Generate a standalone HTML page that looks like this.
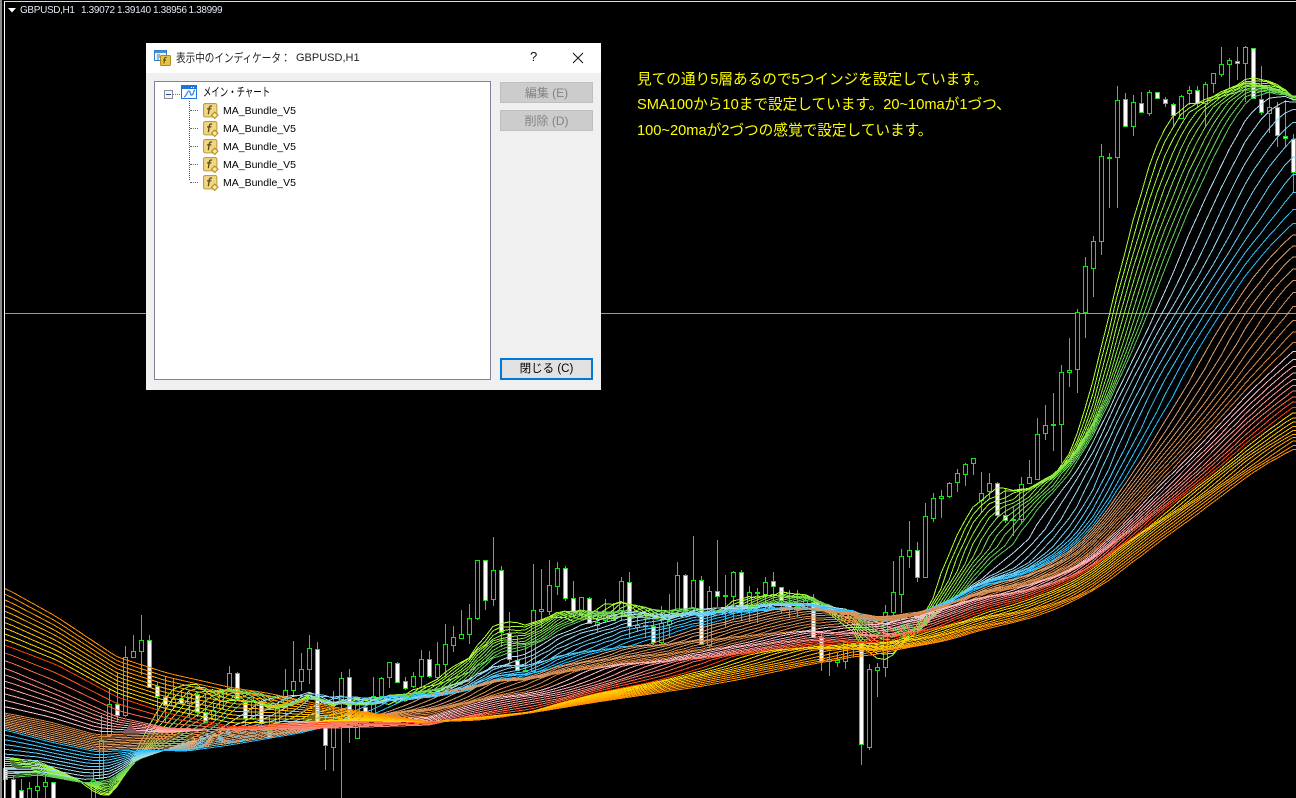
<!DOCTYPE html>
<html lang="ja"><head><meta charset="utf-8"><title>GBPUSD,H1</title>
<style>
html,body{margin:0;padding:0;background:#000;width:1296px;height:798px;overflow:hidden}
body{position:relative;font-family:"Liberation Sans","Noto Sans CJK JP",sans-serif}
div,span,svg{position:absolute;box-sizing:border-box}
span{white-space:nowrap}
#c{left:0;top:0}
.q{font-size:10px;color:#dfe8f4;top:5px;height:12px;line-height:12px;letter-spacing:-.35px}
.y{left:637px;color:#ff0;font-size:14.65px;height:20px;line-height:20px;font-family:"Liberation Sans","Noto Sans CJK JP",sans-serif}
#d{left:146px;top:43px;width:455px;height:347px;background:#f0f0f0}
#tb{left:0;top:0;width:455px;height:30px;background:#fff}
#tree{left:8px;top:38px;width:337px;height:299px;background:#fff;border:1px solid #82829a}
.btn{left:354px;width:93px;height:21px;background:#ccc;border:1px solid #bfbfbf;color:#838383;font-size:12px;text-align:center;line-height:20px}
.row{font-size:10.5px;color:#000;left:77px;height:14px;line-height:14px}
.f{width:16px;height:16px}
.h{left:35px;width:8px;height:1px;border-top:1px dotted #666}
</style></head><body>
<svg id="c" width="1296" height="798" viewBox="0 0 1296 798"></svg>
<div style="left:0;top:0;width:2px;height:798px;background:#8a8a8a"></div>
<div style="left:4px;top:1px;width:1px;height:797px;background:#fff"></div>
<div style="left:4px;top:1px;width:1292px;height:1px;background:#ddd"></div>
<svg style="left:8px;top:8px" width="8" height="5"><path d="M0 0H8L4 4.500Z" fill="#fff"/></svg>
<span class="q" style="left:20px">GBPUSD,H1</span>
<span class="q" style="left:81px">1.39072</span>
<span class="q" style="left:117px">1.39140</span>
<span class="q" style="left:153px">1.38956</span>
<span class="q" style="left:188.500px">1.38999</span>
<span class="y" style="top:70px">見ての通り5層あるので5つインジを設定しています。</span>
<span class="y" style="top:95px">SMA100から10まで設定しています。20~10maが1づつ、</span>
<span class="y" style="top:121px">100~20maが2づつの感覚で設定しています。</span>
<div id="d">
<div id="tb"></div>
<svg style="left:8px;top:7px" width="18" height="16" viewBox="0 0 18 16"><rect x=".5" y=".5" width="12" height="10" fill="#eaf3fb" stroke="#3a7fbf"/><rect x="1" y="1" width="11" height="2" fill="#4a90d0"/><path d="M3 5h3M3 7h3M3 9h2" stroke="#3a7fbf"/><rect x="6.500" y="5.500" width="10" height="10" rx="1" fill="#e6c24a" stroke="#b08a20"/><path d="M12.500 7.500c-1.500-.5-2 .5-2 2l-.7 4M9 10h3" stroke="#5a4510" fill="none"/></svg>
<span style="left:30px;top:7px;font-size:12px;line-height:16px;color:#222;transform:scaleX(.8);transform-origin:0 50%">表示中のインディケータ：</span>
<span style="left:150px;top:7px;font-size:11px;line-height:16px;color:#222">GBPUSD,H1</span>
<span style="left:384px;top:6px;font-size:13px;line-height:16px;color:#111">?</span>
<svg style="left:426px;top:9px" width="12" height="12"><path d="M1 1L11 11M11 1L1 11" stroke="#111" fill="none"/></svg>
<div id="tree">
<svg style="left:9px;top:3px;width:45px;height:100px" width="45" height="100" viewBox="0 0 45 100"><rect x=".5" y="5.500" width="8" height="8" fill="#f4f4f4" stroke="#8a8a9a"/><path d="M2 9.500h5" stroke="#2a4a8a"/><path d="M9 9.500h7" stroke="#777" stroke-dasharray="1 1"/><path d="M25.500 16V96" stroke="#555" stroke-dasharray="1 1"/></svg>
<svg style="left:26px;top:3px" width="17" height="15" viewBox="0 0 17 15"><rect x=".5" y=".5" width="15" height="13" fill="#fff" stroke="#1e74d8"/><rect x="1" y="1" width="14" height="3" fill="#1e74d8"/><path d="M10 2.500h1M12 2.500h1" stroke="#fff"/><path d="M3 12C6 11 6 6 8 6S9 11 11 10 12 6 14 5" stroke="#3a8ae0" fill="none" stroke-width="1.300"/></svg>
<span style="left:48px;top:2px;font-size:12px;line-height:16px;color:#000;transform:scaleX(.7);transform-origin:0 50%">メイン・チャート</span>
<div class="h" style="top:28px"></div><div class="h" style="top:46px"></div><div class="h" style="top:64px"></div><div class="h" style="top:82px"></div><div class="h" style="top:100px"></div>
<svg class="f" style="left:48px;top:21px" viewBox="0 0 15 15"><use href="#fi"/></svg>
<svg class="f" style="left:48px;top:39px" viewBox="0 0 15 15"><use href="#fi"/></svg>
<svg class="f" style="left:48px;top:57px" viewBox="0 0 15 15"><use href="#fi"/></svg>
<svg class="f" style="left:48px;top:75px" viewBox="0 0 15 15"><use href="#fi"/></svg>
<svg class="f" style="left:48px;top:93px" viewBox="0 0 15 15"><use href="#fi"/></svg>
<span class="row" style="left:68px;top:21.500px">MA_Bundle_V5</span>
<span class="row" style="left:68px;top:39.500px">MA_Bundle_V5</span>
<span class="row" style="left:68px;top:57.500px">MA_Bundle_V5</span>
<span class="row" style="left:68px;top:75.500px">MA_Bundle_V5</span>
<span class="row" style="left:68px;top:93.500px">MA_Bundle_V5</span>
</div>
<div class="btn" style="top:39px">編集 (E)</div>
<div class="btn" style="top:67px">削除 (D)</div>
<div class="btn" style="top:315px;background:#e1e1e1;border:2px solid #0078d7;color:#000;line-height:18px;height:22px;font-size:11.5px">閉じる (C)</div>
</div>
<svg width="0" height="0" style="left:0;top:0"><defs><g id="fi"><rect x=".5" y=".5" width="12.500" height="12.500" rx="1.500" fill="#efd684" stroke="#c39c38"/><path d="M8.500 3C6.800 2.400 6 3.400 5.800 5L5 10.500M3.800 5.500H7.800" stroke="#5b4614" stroke-width="1.200" fill="none"/><path d="M11 8.500L14 11.500 11 14.500 8 11.500Z" fill="#f6e7b0" stroke="#b08a20"/></g></defs></svg>
<script>
(function(){
var G='#14e614',out=[],C=[];
function parse(s){var a=s.split(' ').map(function(p){return p.split(':').map(Number)});var r=[];
 var i=0;for(var x=0;x<=1300;x++){while(i<a.length-2&&x>a[i+1][0])i++;var k=(x-a[i][0])/(a[i+1][0]-a[i][0]);if(k<0)k=0;if(k>1)k=1;r[x]=a[i][1]+(a[i+1][1]-a[i][1])*k}
 var o=[];for(x=0;x<=1300;x++){var sum=0,n=0;for(var j=-4;j<=4;j++){if(r[x+j]!==undefined){sum+=r[x+j];n++}}o[x]=sum/n}return o}
var E={
g0:parse('5:757 40:762 85:783 100:792 108:800 120:785 137:758 160:718 187:688 200:686 233:692 277:697 310:693 333:703 370:700 400:697 430:687 470:660 493:630 523:627 563:612 583:612 620:603 643:607 663:610 730:607 763:598 797:594 813:598 830:607 857:630 880:652 900:640 915:625 930:608 1296:98'),
g1:parse('5:778 40:775 85:783 110:780 137:760 170:748 200:736 240:718 277:705 310:695 333:703 370:698 430:695 470:678 497:665 540:648 583:628 620:622 663:616 730:611 763:604 797:600 830:608 857:617 880:622 900:622 930:616 960:598 977:580 1000:560 1033:533 1067:470 1296:105'),
b:parse('5:730 50:742 97:752 137:750 187:751 230:745 300:733 333:725 360:718 430:698 463:690 497:680 563:667 640:655 697:647 763:635 813:622 840:615 863:617 897:618 930:610 970:592 1000:585 1047:565 1080:537 1113:470 1153:420 1190:347 1217:320 1247:263 1277:237 1296:227'),
t:parse('5:713 50:722 97:735 167:733 233:728 300:722 430:716 497:695 563:683 663:667 697:663 763:643 830:627 880:627 930:617 1000:590 1050:575 1083:563 1113:543 1140:520 1167:470 1200:440 1296:350'),
s:parse('5:668 57:690 117:717 167:728 233:730 333:728 430:725 463:717 513:707 563:698 613:683 697:657 730:652 780:638 847:633 897:635 930:623 1010:595 1067:577 1107:550 1143:520 1200:465 1233:437 1296:390'),
r:parse('5:645 57:665 117:697 167:713 233:727 333:722 430:722 530:712 563:702 597:693 647:683 697:670 763:652 797:648 863:645 900:640 967:622 1033:607 1100:577 1150:528 1200:480 1253:437 1296:405'),
o:parse('5:588 57:617 117:657 167:673 233:688 267:693 333:707 430:722 480:720 530:713 597:702 697:687 737:680 797:667 830:660 863:652 900:648 967:637 1047:610 1107:582 1153:540 1200:497 1253:462 1296:447')};
function hex(c){return [parseInt(c.substr(1,2),16),parseInt(c.substr(3,2),16),parseInt(c.substr(5,2),16)]}
function mix(a,b,k){a=hex(a);b=hex(b);return 'rgb('+[0,1,2].map(function(i){return Math.round(a[i]+(b[i]-a[i])*k)}).join(',')+')'}
function cand(ox,oy,l){l.forEach(function(c){
 var x0=ox+c[0]/3,k=Math.round((x0-5)/8),x=5+8*k;
 var hi=Math.round(oy+c[1]/3),lo=Math.round(oy+c[2]/3),t=Math.round(oy+c[3]/3),b=Math.round(oy+c[4]/3);
 C[k]=c[5]?(oy+c[4]/3):(oy+c[3]/3);
 out.push('<rect x="'+x+'" y="'+hi+'" width="1" height="'+(lo-hi)+'" fill="'+G+'"/>');
 var h=Math.max(1,b-t);
 out.push('<rect x="'+(x-2)+'" y="'+t+'" width="5" height="'+(h+1)+'" fill="'+G+'"/>');
 if(h>=2)out.push('<rect x="'+(x-1)+'" y="'+(t+1)+'" width="3" height="'+(h-1)+'" fill="'+(c[5]?'#fff':'#000')+'"/>');
})}
out.push('<rect x="5" y="313" width="1291" height="1" fill="#9a9a9a"/>');
cand(0,560,[[16,620,714,625,658,1],[40,645,714,658,714,1],[64,658,714,691,714,1],[88,667,714,685,714,0],[112,640,714,679,691,0],[136,645,714,667,679,0],[160,667,714,667,714,1],[280,630,714,660,714,0],[304,465,655,540,655,0],[328,385,525,432,525,0],[352,337,485,433,465,1],[376,258,470,292,465,0],[400,225,295,274,290,0],[424,165,345,241,272,0],[448,225,385,241,380,1],[472,365,490,379,409,1],[496,350,490,411,436,1],[520,355,445,417,434,0],[544,390,430,415,430,1],[568,395,475,400,430,0],[592,400,470,403,455,1],[616,405,490,457,485,1],[640,430,480,450,478,0],[664,390,445,390,445,0],[688,318,395,340,388,0],[712,337,415,338,415,1],[736,420,520,427,475,1],[760,410,480,420,475,0],[784,420,495,425,490,1],[808,470,535,510,530,1],[832,440,490,445,490,0],[856,327,480,391,450,0],[880,243,405,364,391,0],[904,279,392,328,364,0],[928,225,372,265,328,0],[952,247,490,268,485,1],[976,470,630,500,556,1],[1000,392,632,500,560,0],[1024,335,714,355,430,0],[1048,327,548,352,480,1],[1072,430,535,430,535,0],[1096,425,460,440,457,1],[1120,350,460,407,458,0],[1144,350,410,355,407,0],[1168,307,385,307,352,0],[1192,305,365,308,367,1],[1216,350,390,364,385,1],[1240,335,385,347,379,0],[1264,270,380,298,347,0],[1288,272,355,298,348,1]]);
cand(430,520,[[22,365,480,432,470,0],[46,312,470,373,433,0],[70,318,395,351,374,0],[94,270,357,343,353,0],[118,252,372,295,341,0],[142,120,300,121,293,0],[166,120,270,121,239,1],[190,52,258,151,236,0],[214,138,380,151,336,1],[238,277,430,339,418,1],[262,348,450,420,450,1],[286,370,455,450,453,0],[310,132,450,271,452,0],[334,148,325,268,272,0],[358,121,285,196,272,0],[382,126,225,145,197,0],[406,138,243,145,233,1],[430,183,290,235,274,1],[454,232,295,232,272,0],[478,232,310,233,308,1],[502,270,335,305,315,0],[526,238,310,280,300,0],[550,250,300,290,300,0],[574,170,300,183,270,0],[598,156,355,187,317,1],[622,290,335,316,321,0],[646,280,350,316,318,0],[670,300,375,318,365,1],[694,258,372,309,365,0],[718,222,355,300,312,0],[742,126,280,166,270,0],[766,163,280,166,272,1],[790,48,270,181,265,0],[814,168,375,181,372,1],[838,198,385,213,375,0],[862,60,260,214,229,1],[886,165,325,226,228,0],[910,152,300,157,227,0],[934,150,300,157,262,1],[958,197,305,217,265,0],[982,205,310,217,220,0],[1006,170,270,187,221,0],[1030,155,240,184,199,1],[1054,200,280,202,240,1],[1078,210,290,255,262,1],[1102,210,290,255,258,0],[1126,225,270,240,260,0],[1150,222,352,245,350,1],[1174,340,452,350,422,1],[1198,395,467,418,423,0],[1222,395,440,420,426,0],[1246,365,447,367,423,0],[1270,370,412,368,372,0],[1294,360,735,370,673,1],[1318,432,690,448,680,0],[1342,430,530,440,449,0],[1366,255,470,275,440,0],[1390,124,290,217,275,0],[1414,88,280,109,221,0]]);
cand(900,320,[[28,603,745,691,709,0],[52,667,785,691,770,1],[76,550,773,589,770,0],[100,520,605,535,593,0],[124,510,593,527,535,0],[148,485,533,488,527,0],[172,447,515,458,487,0],[196,430,497,431,461,0],[220,415,465,415,430,0],[244,457,580,520,539,0],[268,460,537,488,512,0],[292,487,590,488,586,1],[316,505,610,585,600,1],[340,560,647,598,601,0],[364,472,610,493,598,0],[388,420,490,472,490,0],[412,294,480,341,476,0],[436,255,360,316,340,0],[460,220,392,313,316,0],[484,136,428,157,313,0],[508,54,200,151,157,0]]);
cand(900,30,[[532,837,1089,847,1017,0],[556,680,924,709,845,0],[580,618,800,634,715,0],[604,343,675,379,634,0],[628,370,533,382,384,0],[652,168,533,211,382,0],[676,190,290,208,289,1],[700,195,318,215,287,0],[724,187,248,218,247,1],[748,180,258,185,248,0],[772,185,203,185,203,1],[796,200,230,206,220,1],[820,220,290,221,256,1],[844,196,265,197,265,0],[868,168,225,179,190,0],[892,168,235,179,218,1],[916,155,290,163,218,0],[940,130,190,130,160,0],[964,52,140,103,131,0],[988,85,175,89,103,0],[1012,52,150,92,100,1],[1036,47,215,52,100,0],[1060,55,205,55,205,1],[1084,108,255,206,247,1],[1108,170,310,230,250,0],[1132,215,352,230,316,1],[1156,210,352,317,325,1],[1180,312,490,327,427,1]]);
C[1]=812;C[2]=812;C[6]=812;C[7]=825;C[8]=825;C[9]=825;C[10]=825;
var N=162,P=[0];for(var i=0;i<N;i++)P[i+1]=P[i]+C[i];
function env(p,x){
 var a,b,t;
 if(p<=20){a=E.g0;b=E.g1;t=(p-10)/10}
 else if(p<=40){a=E.g1;b=E.b;t=(p-20)/20}
 else if(p<=60){a=E.b;b=E.t;t=(p-40)/20}
 else if(p<=74){a=E.t;b=E.s;t=(p-60)/14}
 else if(p<=80){a=E.s;b=E.r;t=(p-74)/6}
 else{a=E.r;b=E.o;t=(p-80)/20}
 return a[x]+(b[x]-a[x])*t}
function col(p){
 if(p<=20)return mix('#adff2f','#5fc85f',(p-10)/10);
 if(p<=40)return mix('#b5dcec','#1fc0ff',(p-22)/18);
 if(p<=60)return mix('#d8a070','#d4843f',(p-42)/18);
 if(p<=74)return mix('#ffc0cb','#fa8072',(p-62)/12);
 if(p<=80)return mix('#fa8072','#ff4000',(p-74)/6);
 return mix('#ffd800','#ff8c00',(p-82)/18)}
function line(p){var pts=[];
 for(var k=0;k<N;k++){var x=5+8*k,v=env(p,x);
  if(k>=p-1){var s=(P[k+1]-P[k+1-p])/p,w=Math.min(1,(k-p+1)/12);v=v*(1-w)+s*w}
  pts.push(x+','+v.toFixed(1));
  if(k==N-1)pts.push('1296,'+v.toFixed(1));}
 out.push('<polyline points="'+pts.join(' ')+'" fill="none" stroke="'+col(p)+'" stroke-width="1" shape-rendering="crispEdges"/>')}
var p;
for(p=10;p<=20;p++)line(p);
for(p=22;p<=100;p+=2)line(p);
document.getElementById('c').innerHTML=out.join('');
})();
</script>
</body></html>
